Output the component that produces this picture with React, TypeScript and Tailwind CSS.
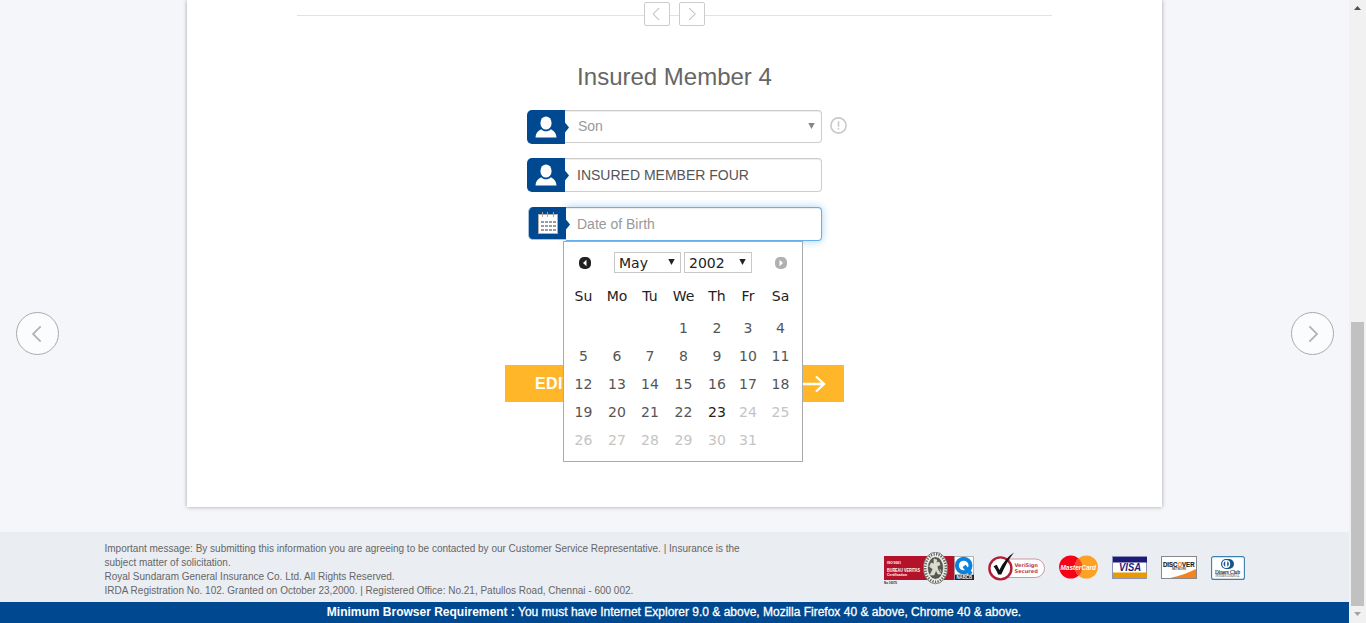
import type { ReactNode } from "react";

const ARIAL = "font-['Liberation_Sans',Arial,sans-serif]";

function Chevron({ dir, size, color, width }: { dir: "left" | "right"; size: number; color: string; width: number }) {
  return (
    <svg width={size} height={size} viewBox="0 0 20 20" fill="none" stroke={color} strokeWidth={width}>
      <path d={dir === "left" ? "M13 1.5 L4.5 10 L13 18.5" : "M6 1.5 L14.5 10 L6 18.5"} />
    </svg>
  );
}

function PersonIcon() {
  return (
    <svg width="22" height="22" viewBox="0 0 22 22" fill="#fff">
      <ellipse cx="11" cy="7" rx="5.6" ry="6.6" />
      <path d="M0.5 21.6 C0.7 17.5 2.6 15 6.2 13.3 C8.6 16 13.4 16 15.8 13.3 C19.4 15 21.3 17.5 21.5 21.6 Z" />
    </svg>
  );
}

function CalendarIcon() {
  return (
    <svg width="20" height="22" viewBox="0 0 20 22">
      <rect x="0.5" y="2.5" width="19" height="19" fill="#fff" stroke="#b5aeaa" />
      {[4.5, 9.5, 15.5].map((x) => (
        <path key={x} d={`M${x} 0 V5`} stroke="#aaa3a0" />
      ))}
      {[9, 13, 17].map((y) =>
        [3, 7, 11, 15].map((x) => <rect key={`${x}-${y}`} x={x} y={y} width="3" height="2" fill="#9b9ba0" />)
      )}
    </svg>
  );
}

function Field({ icon, children, focus, short }: { icon: ReactNode; children: ReactNode; focus?: boolean; short?: boolean }) {
  return (
    <div className="relative flex h-[34px] w-[295px]">
      <div
        className={`relative z-10 flex w-[38px] shrink-0 items-center justify-center rounded-l-[5px] bg-[#004990] ${
          focus ? "ml-px h-[33px] border-b border-l border-[#a9c2dc]" : "h-[34px]"
        }`}
      >
        {icon}
        <svg className="absolute -right-[4px] top-[12px]" width="4" height="11" viewBox="0 0 4 11">
          <path d="M0 0.5 L4 5.5 L0 10.5Z" fill="#004990" />
        </svg>
      </div>
      <div
        className={`flex flex-1 items-center rounded-r-[4px] border bg-white text-[14px] ${short ? "h-[33px]" : ""} ${
          focus
            ? "border-[#66afe9] border-l-0 pl-[11px] shadow-[inset_0_1px_1px_rgba(0,0,0,0.075),0_0_8px_rgba(102,175,233,0.6)]"
            : "border-[#ccc] border-l-0 pl-[12px] shadow-[inset_0_1px_1px_rgba(0,0,0,0.075)]"
        }`}
      >
        {children}
      </div>
    </div>
  );
}

function RoundArrow({ dir }: { dir: "left" | "right" }) {
  return (
    <button className="flex h-[43px] w-[43px] items-center justify-center rounded-full border border-[#aaa] bg-[#fbfcfd]">
      <Chevron dir={dir} size={18} color="#b3b3b3" width={2} />
    </button>
  );
}

const weeks = [
  ["", "", "", "1", "2", "3", "4"],
  ["5", "6", "7", "8", "9", "10", "11"],
  ["12", "13", "14", "15", "16", "17", "18"],
  ["19", "20", "21", "22", "23", "24", "25"],
  ["26", "27", "28", "29", "30", "31", ""],
];

function PickerSelect({ label, className }: { label: string; className: string }) {
  return (
    <div className={`flex h-[21px] items-center justify-between border border-[#c9c9c9] pl-[4px] pr-[5px] ${className}`}>
      <span className="mt-px">{label}</span>
      <svg className="-mt-[2px]" width="7" height="6" viewBox="0 0 7 6">
        <path d="M0.3 0H6.7L3.5 6Z" fill="#222" />
      </svg>
    </div>
  );
}

function DatePicker() {
  const cols = "grid grid-cols-[33px_34px_32px_35px_32px_30px_35px]";
  return (
    <div className="absolute left-[36px] top-[34px] z-20 h-[221px] w-[240px] border border-[#aaa] bg-white font-['DejaVu_Sans',Verdana,sans-serif] text-[14px] text-[#222]">
      <div className="flex h-[41px] items-center pl-[15px] pr-[15px]">
        <svg width="12" height="12" viewBox="0 0 12 12">
          <rect width="12" height="12" rx="5" fill="#222" />
          <path d="M7.5 2.8V9.2L4 6Z" fill="#fff" />
        </svg>
        <PickerSelect label="May" className="ml-[23px] w-[67px]" />
        <PickerSelect label="2002" className="ml-[3px] w-[68px]" />
        <svg className="ml-auto" width="12" height="12" viewBox="0 0 12 12">
          <rect width="12" height="12" rx="5" fill="#b0b0b0" />
          <path d="M4.5 2.8V9.2L8 6Z" fill="#fff" />
        </svg>
      </div>
      <div className={`${cols} h-[31px] items-center pl-[3px] pb-[4px] text-center`}>
        {["Su", "Mo", "Tu", "We", "Th", "Fr", "Sa"].map((d) => (
          <span key={d}>{d}</span>
        ))}
      </div>
      {weeks.map((week, r) => (
        <div key={r} className={`${cols} h-[28px] items-center pl-[3px] text-center`}>
          {week.map((d, c) => (
            <span key={c} className={d === "23" ? "text-[#222]" : Number(d) > 23 ? "text-[#c4c4c4]" : "text-[#555]"}>
              {d}
            </span>
          ))}
        </div>
      ))}
    </div>
  );
}

function BureauVeritas() {
  return (
    <svg width="90" height="34" viewBox="0 0 90 34" fontFamily="Liberation Sans, sans-serif" fontWeight="bold">
      <rect y="4" width="71" height="24" fill="#b4122b" />
      <text x="3" y="11.5" fontSize="4.4" fill="#fff" textLength="14" lengthAdjust="spacingAndGlyphs">ISO 9001</text>
      <text x="3" y="19.5" fontSize="5" fill="#fff" textLength="33" lengthAdjust="spacingAndGlyphs">BUREAU VERITAS</text>
      <text x="3" y="24.3" fontSize="4.2" fill="#fff" textLength="20" lengthAdjust="spacingAndGlyphs">Certification</text>
      <text x="0" y="32" fontSize="3.8" fill="#222" textLength="13" lengthAdjust="spacingAndGlyphs">No 10075</text>
      <ellipse cx="51.5" cy="16" rx="12.2" ry="15.8" fill="#f2f2ee" stroke="#55554d" strokeWidth="0.7" />
      <ellipse cx="51.5" cy="16" rx="10.3" ry="13.8" fill="none" stroke="#66665e" strokeWidth="2.6" strokeDasharray="1.3 1.3" />
      <ellipse cx="51.5" cy="16" rx="8" ry="11.3" fill="#55584e" stroke="#eee" strokeWidth="0.7" />
      <path d="M50 7l3 1-1 3 3-1 1 3-3 1 1 4 3 4h-3l-2-4-2 5h-4l3-6-3-2 1-4 3 1zM47 12l-2 3M56 17l1 3" fill="#dddcd2" stroke="#dddcd2" strokeWidth="0.7" />
      <rect x="70.5" y="4.5" width="19" height="23" fill="#fff" stroke="#999" strokeWidth="0.7" />
      <circle cx="79.7" cy="13.5" r="6.8" fill="none" stroke="#0a83df" strokeWidth="4" />
      <path d="M80 14l7 8" stroke="#0a83df" strokeWidth="4" />
      <rect x="71" y="22.7" width="19" height="5.3" fill="#252525" />
      <text x="72.5" y="27" fontSize="4.7" fill="#fff" textLength="15.5" lengthAdjust="spacingAndGlyphs">NABCB</text>
    </svg>
  );
}

function VeriSign() {
  return (
    <svg width="58" height="30" viewBox="0 0 58 30" fontFamily="DejaVu Sans, sans-serif" fontWeight="bold">
      <rect x="10" y="7" width="46.5" height="18.5" rx="9.2" fill="#fff" stroke="#c67d8a" strokeWidth="0.8" />
      <circle cx="12.4" cy="16.4" r="11" fill="#fff" stroke="#b11e36" strokeWidth="2.4" />
      <path d="M5.5 14.2l3.3-1.5 2.6 5.2C15 10.5 20 4.5 26 .5 20.5 7.5 16.5 15 13.3 22.5h-3.2C9 19.5 7.5 16.7 5.5 14.2Z" fill="#111" />
      <text x="26.5" y="15.4" fontSize="5.1" fill="#ba3d51" textLength="23.5">VeriSign</text>
      <text x="26.5" y="21" fontSize="5.1" fill="#ba3d51" textLength="23.5">Secured</text>
    </svg>
  );
}

function MasterCard() {
  return (
    <svg className="overflow-visible" width="39" height="24" viewBox="0 0 39 24">
      <circle cx="11.7" cy="12" r="11.6" fill="#f70018" />
      <circle cx="27.3" cy="12" r="11.6" fill="#fca124" />
      <path d="M19.5 3.4a11.6 11.6 0 0 1 0 17.2a11.6 11.6 0 0 1 0-17.2" fill="#f6492a" />
      <text x="1.5" y="14.8" fontFamily="Liberation Sans, sans-serif" fontWeight="bold" fontStyle="italic" fontSize="7" fill="#fff" textLength="35.5" lengthAdjust="spacingAndGlyphs">MasterCard</text>
    </svg>
  );
}

function Visa() {
  return (
    <svg width="35" height="23" viewBox="0 0 35 23">
      <rect x="0.5" y="0.5" width="34" height="22" fill="#fff" stroke="#8c94bb" />
      <rect x="1" y="1" width="34" height="5.5" fill="#1c1b78" />
      <rect x="1" y="16.5" width="34" height="5.5" fill="#e79b00" />
      <text x="7" y="15.2" fontFamily="Liberation Sans, sans-serif" fontWeight="bold" fontStyle="italic" fontSize="10.5" fill="#1c1b78" textLength="22" lengthAdjust="spacingAndGlyphs">VISA</text>
    </svg>
  );
}

function Discover() {
  return (
    <svg width="36" height="23" viewBox="0 0 36 23" fontFamily="Liberation Sans, sans-serif" fontWeight="bold">
      <rect x="0.5" y="0.5" width="35" height="22" fill="#fff" stroke="#888" />
      <path d="M35 13 C27 17 19 20 9 22 H35Z" fill="#f6821f" />
      <text x="2" y="11" fontSize="7" fill="#222" stroke="#222" strokeWidth="0.2" textLength="31.5" lengthAdjust="spacingAndGlyphs">
        DISC<tspan fill="#f6821f" stroke="#f6821f">O</tspan>VER
      </text>
      <text x="11" y="14.4" fontSize="2.6" fill="#444" textLength="14">NETWORK</text>
    </svg>
  );
}

function Diners() {
  return (
    <svg width="34" height="24" viewBox="0 0 34 24" fontFamily="Liberation Serif, serif">
      <rect x="0.6" y="0.6" width="32.8" height="22.8" rx="2" fill="#fff" stroke="#397fb0" strokeWidth="1.1" />
      <rect x="10" y="3" width="13" height="10" rx="5" fill="#15568e" />
      <circle cx="15.2" cy="8" r="4" fill="#fff" />
      <path d="M14.2 5.3a3 3 0 0 0 0 5.4zM16.2 5.3a3 3 0 0 1 0 5.4z" fill="#15568e" />
      <text x="4" y="17.8" fontSize="6" fill="#222" stroke="#222" strokeWidth="0.15" textLength="25" lengthAdjust="spacingAndGlyphs">Diners Club</text>
      <text x="4.5" y="20.6" fontSize="3" fill="#222" textLength="24" lengthAdjust="spacingAndGlyphs">INTERNATIONAL</text>
    </svg>
  );
}

function Pager({ dir }: { dir: "left" | "right" }) {
  return (
    <button className="flex h-[24px] w-[26px] items-center justify-center rounded-[2px] border border-[#ccc] bg-white">
      <Chevron dir={dir} size={14} color="#c2c2c2" width={1.5} />
    </button>
  );
}

export default function App() {
  return (
    <div className={`flex h-[623px] w-full overflow-hidden bg-[#f4f6fa] ${ARIAL}`}>
      <div className="flex min-w-0 flex-1 flex-col">
        <main className="flex h-[532px] items-start justify-between">
          <div className="pl-[16px] pt-[312px]">
            <RoundArrow dir="left" />
          </div>
          <section className="mr-px flex h-[507px] w-[975px] flex-col items-center bg-white shadow-[0_0_4px_rgba(0,0,0,0.35)]">
            <div className="mt-[2px] flex w-[755px] items-center">
              <div className="mt-[3px] h-px flex-1 bg-[#e2e2e2]" />
              <Pager dir="left" />
              <div className="mt-[3px] h-px w-[9px] bg-[#e2e2e2]" />
              <Pager dir="right" />
              <div className="mt-[3px] h-px w-[347px] bg-[#e2e2e2]" />
            </div>
            <h2 className="mt-[33px] h-[36px] whitespace-nowrap text-[24px] leading-[36px] text-[#666]">Insured Member 4</h2>
            <form className="mt-[15px] flex w-[295px] flex-col">
              <div className="flex items-start">
                <Field icon={<PersonIcon />} short>
                  <span className="ml-px text-[#999]">Son</span>
                  <svg className="ml-auto mr-[6px] -mt-[2px]" width="7" height="6" viewBox="0 0 7 6">
                    <path d="M0.3 0H6.7L3.5 6Z" fill="#858585" />
                  </svg>
                </Field>
                <svg className="-mr-[25px] ml-[8px] mt-[7px] shrink-0" width="17" height="17" viewBox="0 0 17 17" fill="none" stroke="#c9c9c9">
                  <circle cx="8.5" cy="8.5" r="7.6" strokeWidth="1.6" />
                  <path d="M8.5 4.3V9.7M8.5 11V12.6" strokeWidth="1.6" />
                </svg>
              </div>
              <div className="mt-[14px]">
                <Field icon={<PersonIcon />}>
                  <span className="text-[#555]">INSURED MEMBER FOUR</span>
                </Field>
              </div>
              <div className="relative mt-[15px]">
                <Field icon={<CalendarIcon />} focus>
                  <span className="text-[#999]">Date of Birth</span>
                </Field>
                <DatePicker />
              </div>
            </form>
            <div className="mt-[124px] flex h-[37px] w-[339px] justify-between">
              <button className="w-[104px] bg-[#ffb729] pl-[30px] text-left text-[16px] font-bold tracking-[0.4px] text-white">EDIT</button>
              <button className="flex w-[200px] items-center justify-end bg-[#ffb729] pr-[18px]">
                <svg width="24" height="18" viewBox="0 0 24 18" fill="none" stroke="#fff" strokeWidth="2.3">
                  <path d="M0 9H22M14 1.5L22 9L14 16.5" />
                </svg>
              </button>
            </div>
          </section>
          <div className="pr-[15px] pt-[312px]">
            <RoundArrow dir="right" />
          </div>
        </main>
        <footer className="flex h-[70px] items-start justify-between bg-[#eaedf2] pl-[104.5px] pr-[104px]">
          <p className="mt-[10px] whitespace-nowrap text-[10px] leading-[14px] text-[#666]">
            Important message: By submitting this information you are agreeing to be contacted by our Customer Service Representative. | Insurance is the
            <br />
            subject matter of solicitation.
            <br />
            Royal Sundaram General Insurance Co. Ltd. All Rights Reserved.
            <br />
            IRDA Registration No. 102. Granted on October 23,2000. | Registered Office: No.21, Patullos Road, Chennai - 600 002.
          </p>
          <div className="mt-[20px] flex items-start">
            <BureauVeritas />
            <div className="ml-[14px]">
              <VeriSign />
            </div>
            <div className="ml-[13px] mt-[3px]">
              <MasterCard />
            </div>
            <div className="ml-[14px] mt-[4px]">
              <Visa />
            </div>
            <div className="ml-[14px] mt-[4px]">
              <Discover />
            </div>
            <div className="ml-[14px] mt-[4px]">
              <Diners />
            </div>
          </div>
        </footer>
        <div className="h-[21px] whitespace-nowrap bg-[#004990] pr-px text-center text-[12px] leading-[20px] text-white">
          <b>Minimum Browser Requirement :</b>{" "}
          <span className="[-webkit-text-stroke:0.3px_#fff]">
            You must have Internet Explorer 9.0 &amp; above, Mozilla Firefox 40 &amp; above, Chrome 40 &amp; above.
          </span>
        </div>
      </div>
      <div className="flex w-[17px] flex-col items-center bg-[#f1f1f1]">
        <svg className="mt-[6px]" width="7" height="4" viewBox="0 0 7 4">
          <path d="M0 4L3.5 0L7 4Z" fill="#505050" />
        </svg>
        <div className="mt-[312px] h-[284px] w-[13px] bg-[#c1c1c1]" />
        <svg className="mt-[6px]" width="7" height="4" viewBox="0 0 7 4">
          <path d="M0 0L3.5 4L7 0Z" fill="#a3a3a3" />
        </svg>
      </div>
    </div>
  );
}
